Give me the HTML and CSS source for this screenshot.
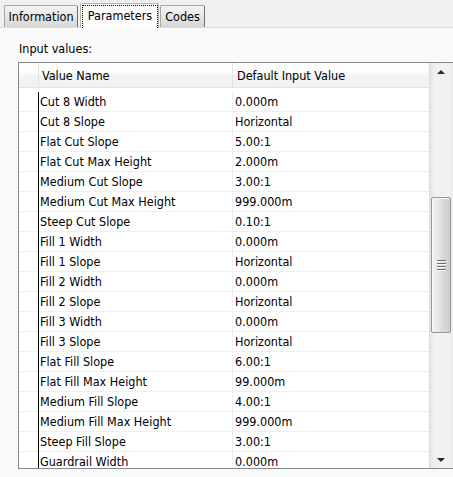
FILE: index.html
```html
<!DOCTYPE html>
<html>
<head>
<meta charset="utf-8">
<link rel="stylesheet" href="styles.css">
</head>
<body>
<div class="tabs">
  <div class="tab tab-info">Information</div>
  <div class="tab tab-sel"><span class="focus">Parameters</span></div>
  <div class="tab tab-codes">Codes</div>
</div>
<div class="page">
  <div class="label">Input values:</div>
  <div class="list">
    <div class="grid">
      <div class="header">
        <div class="h0"></div>
        <div class="h1">Value Name</div>
        <div class="h2">Default Input Value</div>
      </div>
      <div class="rows">
        <div class="row"><div class="c0"></div><div class="c1">Cut 8 Width</div><div class="c2">0.000m</div></div>
        <div class="row"><div class="c0"></div><div class="c1">Cut 8 Slope</div><div class="c2">Horizontal</div></div>
        <div class="row"><div class="c0"></div><div class="c1">Flat Cut Slope</div><div class="c2">5.00:1</div></div>
        <div class="row"><div class="c0"></div><div class="c1">Flat Cut Max Height</div><div class="c2">2.000m</div></div>
        <div class="row"><div class="c0"></div><div class="c1">Medium Cut Slope</div><div class="c2">3.00:1</div></div>
        <div class="row"><div class="c0"></div><div class="c1">Medium Cut Max Height</div><div class="c2">999.000m</div></div>
        <div class="row"><div class="c0"></div><div class="c1">Steep Cut Slope</div><div class="c2">0.10:1</div></div>
        <div class="row"><div class="c0"></div><div class="c1">Fill 1 Width</div><div class="c2">0.000m</div></div>
        <div class="row"><div class="c0"></div><div class="c1">Fill 1 Slope</div><div class="c2">Horizontal</div></div>
        <div class="row"><div class="c0"></div><div class="c1">Fill 2 Width</div><div class="c2">0.000m</div></div>
        <div class="row"><div class="c0"></div><div class="c1">Fill 2 Slope</div><div class="c2">Horizontal</div></div>
        <div class="row"><div class="c0"></div><div class="c1">Fill 3 Width</div><div class="c2">0.000m</div></div>
        <div class="row"><div class="c0"></div><div class="c1">Fill 3 Slope</div><div class="c2">Horizontal</div></div>
        <div class="row"><div class="c0"></div><div class="c1">Flat Fill Slope</div><div class="c2">6.00:1</div></div>
        <div class="row"><div class="c0"></div><div class="c1">Flat Fill Max Height</div><div class="c2">99.000m</div></div>
        <div class="row"><div class="c0"></div><div class="c1">Medium Fill Slope</div><div class="c2">4.00:1</div></div>
        <div class="row"><div class="c0"></div><div class="c1">Medium Fill Max Height</div><div class="c2">999.000m</div></div>
        <div class="row"><div class="c0"></div><div class="c1">Steep Fill Slope</div><div class="c2">3.00:1</div></div>
        <div class="row"><div class="c0"></div><div class="c1">Guardrail Width</div><div class="c2">0.000m</div></div>
      </div>
    </div>
    <div class="scroll">
      <div class="sbtn"><div class="arrow-up"></div></div>
      <div class="track">
        <div class="thumb"><div class="grip"></div></div>
      </div>
      <div class="sbtn"><div class="arrow-down"></div></div>
    </div>
  </div>
</div>
</body>
</html>
```
FILE: styles.css
```css
* { box-sizing: border-box; }
html, body {
  margin: 0;
  padding: 0;
  width: 453px;
  height: 477px;
  overflow: hidden;
  background: #f0f0f0;
  font-family: "DejaVu Sans Condensed", "DejaVu Sans", sans-serif;
  font-stretch: condensed;
  font-size: 12.5px;
  color: #000;
}
.tabs {
  display: flex;
  align-items: flex-end;
  height: 27px;
  padding-left: 4px;
  position: relative;
  z-index: 2;
}
.tab {
  height: 22px;
  line-height: 21px;
  text-align: center;
  background: linear-gradient(to bottom, #f4f4f4, #e6e6e6 50%, #d6d6d6);
  border: 1px solid #a7a7a7;
  border-bottom: none;
  border-right-color: #6f6f6f;
  border-radius: 2px 2px 0 0;
  white-space: nowrap;
}
.tab-info { width: 74px; }
.tab-sel {
  width: 79px;
  height: 25px;
  margin-left: 2px;
  margin-bottom: -1px;
  background: #fcfcfc;
  border-color: #b5b5b5;
  padding: 1px 0 0 1px;
}
.focus {
  display: block;
  width: 76px;
  height: 23px;
  line-height: 20px;
  border: 1px dotted #000;
  border-bottom: none;
}
.tab-codes { width: 45px; margin-left: 1px; }
.page {
  height: 450px;
  background: #f9f9f9;
  border-top: 1px solid #dcdcdc;
  padding: 14px 0 0 18px;
}
.label {
  height: 14px;
  line-height: 14px;
  padding-left: 1px;
  margin-bottom: 6px;
}
.list {
  display: flex;
  width: 436px;
  height: 407px;
  border: 1px solid #828790;
  background: #fff;
}
.grid {
  width: 411px;
  border-right: 1px solid #dcdcdc;
  display: flex;
  flex-direction: column;
}
.header {
  display: flex;
  height: 25px;
  line-height: 26px;
  border-bottom: 1px solid #e3e3e3;
  background: linear-gradient(to bottom, #ffffff, #fbfbfb 45%, #f1f2f3 55%, #f3f3f3);
}
.h0 { width: 20px; border-right: 1px solid #e3e3e3; }
.h1 { width: 194px; border-right: 1px solid #e3e3e3; padding-left: 3px; }
.h2 { flex: 1; padding-left: 4px; }
.rows {
  height: 380px;
  overflow: hidden;
  padding-top: 4px;
}
.row {
  display: flex;
  height: 20px;
  line-height: 20px;
  border-bottom: 1px solid #efefef;
}
.c0 { width: 19px; }
.c1 {
  width: 195px;
  border-left: 1px solid #000;
  border-right: 1px solid #efefef;
  padding-left: 1px;
  white-space: nowrap;
}
.row .c1 { margin-bottom: -1px; }
.c2 { flex: 1; padding-left: 2px; white-space: nowrap; }
.scroll {
  width: 23px;
  display: flex;
  flex-direction: column;
  background: linear-gradient(to right, #e4e4e4, #f0f0f0 20%, #f2f2f2 80%, #ececec);
}
.sbtn {
  height: 17px;
  display: flex;
  align-items: center;
  justify-content: center;
  padding-right: 2px;
}
.arrow-up {
  width: 0; height: 0;
  border-left: 4px solid transparent;
  border-right: 4px solid transparent;
  border-bottom: 4px solid #2a2a2a;
}
.arrow-down {
  width: 0; height: 0;
  border-left: 4px solid transparent;
  border-right: 4px solid transparent;
  border-top: 4px solid #2a2a2a;
}
.track { flex: 1; padding-top: 117px; }
.thumb {
  margin-left: 1px;
  width: 20px;
  height: 136px;
  border: 1px solid #969696;
  border-radius: 2px;
  background: linear-gradient(to right, #f2f2f2, #e6e6e6 40%, #d8d8d8 60%, #cfcfcf);
  box-shadow: inset 1px 1px 0 #fafafa;
  display: flex;
  align-items: center;
  justify-content: center;
}
.grip {
  width: 9px;
  height: 11px;
  margin-left: 1px;
  background: repeating-linear-gradient(to bottom, #6e6e6e 0, #6e6e6e 1px, #f8f8f8 1px, #f8f8f8 2px, transparent 2px, transparent 3px);
}
```
